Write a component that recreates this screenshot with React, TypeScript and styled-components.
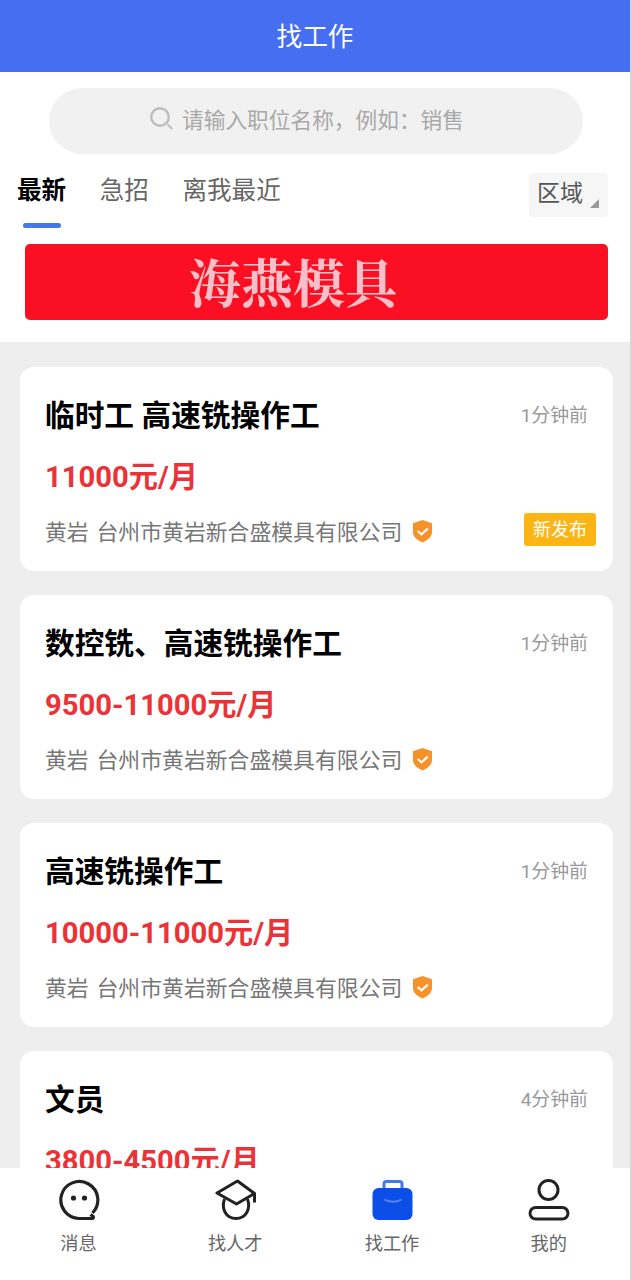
import React from 'react';
import styled, { createGlobalStyle } from 'styled-components';

const jobs = [
  { title: '临时工 高速铣操作工', pay: '11000元/月', time: '1分钟前', isNew: true },
  { title: '数控铣、高速铣操作工', pay: '9500-11000元/月', time: '1分钟前', isNew: false },
  { title: '高速铣操作工', pay: '10000-11000元/月', time: '1分钟前', isNew: false },
  { title: '文员', pay: '3800-4500元/月', time: '4分钟前', isNew: false },
];

const GlobalStyle = createGlobalStyle`
  html, body {
    margin: 0;
    padding: 0;
    height: 1280px;
    overflow: hidden;
    background: #eeeeee;
  }
  * {
    box-sizing: border-box;
  }
  body {
    font-family: Roboto, "Noto Sans CJK SC", sans-serif;
  }
`;

const Screen = styled.div`
  width: 631px;
  height: 1280px;
  overflow: hidden;
  position: relative;
  background: #eeeeee;
  border-right: 1px solid #d8d8d8;
`;

const Header = styled.header`
  height: 72px;
  padding-bottom: 4px;
  background: #456ff0;
  color: #fff;
  font-size: 25.7px;
  display: flex;
  align-items: center;
  justify-content: center;
`;

const TopPanel = styled.section`
  background: #fff;
  height: 270px;
  padding-top: 16px;
`;

const SearchBar = styled.div`
  width: 534px;
  height: 66px;
  margin-left: 49px;
  padding: 0 18px 5px 0;
  border-radius: 33px;
  background: #f1f1f1;
  color: #a9a9a9;
  font-size: 21.7px;
  display: flex;
  align-items: center;
  justify-content: center;
  gap: 8px;
`;

const TabRow = styled.div`
  height: 90px;
  padding: 19px 22px 0 17px;
  display: flex;
  align-items: flex-start;
`;

const Tab = styled.div<{ $active?: boolean }>`
  font-size: 24.6px;
  line-height: 36px;
  margin-right: 33.5px;
  position: relative;
  color: ${(p) => (p.$active ? '#000' : '#666')};
  font-weight: ${(p) => (p.$active ? 700 : 400)};

  ${(p) =>
    p.$active &&
    `&::after {
      content: '';
      position: absolute;
      left: 6px;
      top: 50px;
      width: 38px;
      height: 5px;
      border-radius: 3px;
      background: #4379e8;
    }`}
`;

const AreaButton = styled.div`
  margin-left: auto;
  width: 79px;
  height: 44px;
  border-radius: 4px;
  background: #f6f6f6;
  color: #555;
  font-size: 23px;
  padding-left: 8px;
  line-height: 42px;
  position: relative;

  &::after {
    content: '';
    position: absolute;
    right: 9px;
    bottom: 9px;
    border-style: solid;
    border-width: 0 0 9px 9px;
    border-color: transparent transparent #999 transparent;
  }
`;

const Banner = styled.div`
  width: 583px;
  height: 76px;
  margin-left: 25px;
  border-radius: 5px;
  background: #fb0f22;
  color: #f8c0c9;
  font-family: "Noto Serif CJK SC", "Noto Sans CJK SC", serif;
  font-weight: 700;
  font-size: 52px;
  line-height: 74px;
  padding-left: 164px;
`;

const List = styled.main`
  padding: 25px 17px 0 20px;
  display: flex;
  flex-direction: column;
  gap: 24px;
`;

const Card = styled.article`
  height: 204px;
  flex: none;
  background: #fff;
  border-radius: 14px;
  padding: 26px 25px 0;
  position: relative;
`;

const TopLine = styled.div`
  display: flex;
  justify-content: space-between;
  align-items: center;
  height: 40px;
`;

const Title = styled.h2`
  margin: 0;
  color: #000;
  font-size: 29.7px;
  font-weight: 700;
`;

const Time = styled.span`
  color: #999;
  font-size: 18.9px;
  margin-top: 0;
`;

const Pay = styled.div`
  color: #ea3237;
  font-size: 29.2px;
  font-weight: 700;
  line-height: 40px;
  margin-top: 24px;
`;

const CompanyLine = styled.div`
  display: flex;
  align-items: center;
  margin-top: 16px;
  height: 34px;
  color: #777;
  font-size: 21.85px;
  white-space: pre;
  word-spacing: -1.5px;
`;

const NewTag = styled.span`
  position: absolute;
  right: 17px;
  bottom: 25px;
  width: 72px;
  height: 33px;
  border-radius: 3px;
  background: #fdb515;
  color: #fff;
  font-size: 18px;
  padding-bottom: 3px;
  display: flex;
  align-items: center;
  justify-content: center;
`;

const TabBar = styled.nav`
  position: absolute;
  left: 0;
  right: 0;
  bottom: 0;
  height: 112px;
  background: #fff;
  display: grid;
  grid-template-columns: repeat(4, 156.8px);
  padding-top: 10px;
`;

const NavItem = styled.div`
  display: flex;
  flex-direction: column;
  align-items: center;
  color: #666;
  font-size: 18.2px;
  gap: 8px;
  line-height: 28px;
`;

const NavIcon = styled.svg`
  width: 44px;
  height: 44px;
  display: block;
`;

const ShieldIcon = styled.svg`
  width: 21px;
  height: 24px;
  margin-left: 10px;
  margin-top: 2px;
  display: block;
`;

const SearchIcon = () => (
  <svg width="24" height="23" viewBox="0 0 24 23" fill="none" stroke="#bdbdbd">
    <circle cx="10" cy="10" r="8.8" strokeWidth="2.4" />
    <path d="M17.5 17.5l5 4.5" strokeWidth="1.8" />
  </svg>
);

const Shield = () => (
  <ShieldIcon viewBox="0 0 22 24">
    <path d="M11 0.5 L21 4 V13 C21 18.5 15.5 22 11 24 C6.5 22 1 18.5 1 13 V4 Z" fill="#f7922a" />
    <path d="M6 12 L10 15.5 L16.5 9.5" fill="none" stroke="#fff" strokeWidth="2.2" />
  </ShieldIcon>
);

const App = () => {
  return (
    <Screen>
      <GlobalStyle />
      <Header>找工作</Header>
      <TopPanel>
        <SearchBar>
          <SearchIcon />
          <span>请输入职位名称，例如：销售</span>
        </SearchBar>
        <TabRow>
          <Tab $active>最新</Tab>
          <Tab>急招</Tab>
          <Tab>离我最近</Tab>
          <AreaButton>区域</AreaButton>
        </TabRow>
        <Banner>海燕模具</Banner>
      </TopPanel>
      <List>
        {jobs.map((job) => (
          <Card key={job.title}>
            <TopLine>
              <Title>{job.title}</Title>
              <Time>{job.time}</Time>
            </TopLine>
            <Pay>{job.pay}</Pay>
            <CompanyLine>
              黄岩  台州市黄岩新合盛模具有限公司
              <Shield />
            </CompanyLine>
            {job.isNew && <NewTag>新发布</NewTag>}
          </Card>
        ))}
      </List>
      <TabBar>
        <NavItem>
          <NavIcon viewBox="0 0 44 44" fill="none" stroke="#222" strokeWidth="3.2">
            <path d="M36.5 35 A18.5 18.5 0 1 0 23 40.5 H36 C37.5 40.5 37.8 39.2 36.8 38.2 L34.5 36.5" strokeLinejoin="round" />
            <circle cx="17.5" cy="20" r="2.6" fill="#222" stroke="none" />
            <circle cx="28.5" cy="20" r="2.6" fill="#222" stroke="none" />
          </NavIcon>
          消息
        </NavItem>
        <NavItem>
          <NavIcon viewBox="0 0 44 44" fill="none" stroke="#222" strokeWidth="3">
            <path d="M24.5 3 L41.5 15.5 L23.5 26 L4 15 Z" strokeLinejoin="round" />
            <path d="M11.5 21 C8 31 13 40.5 23 40.5 C33 40.5 38 31 34.5 21" />
            <path d="M41.5 15.5 V24.5" />
          </NavIcon>
          找人才
        </NavItem>
        <NavItem>
          <NavIcon viewBox="0 0 44 44">
            <path d="M14 11 V6 C14 4.5 15 3.5 16.5 3.5 H29.5 C31 3.5 32 4.5 32 6 V11" fill="none" stroke="#4379e8" strokeWidth="3" />
            <rect x="2.5" y="10" width="40" height="32" rx="6" fill="#0c4fe8" />
            <path d="M14.5 21.5 C19 24.5 27 24.5 31.5 21.5" fill="none" stroke="#5a86ee" strokeWidth="2" />
          </NavIcon>
          找工作
        </NavItem>
        <NavItem>
          <NavIcon viewBox="0 0 44 44" fill="none" stroke="#222" strokeWidth="3">
            <ellipse cx="21.5" cy="12" rx="9.5" ry="9.5" />
            <rect x="3" y="29.5" width="38" height="11.5" rx="5.75" />
          </NavIcon>
          我的
        </NavItem>
      </TabBar>
    </Screen>
  );
};

export default App;
